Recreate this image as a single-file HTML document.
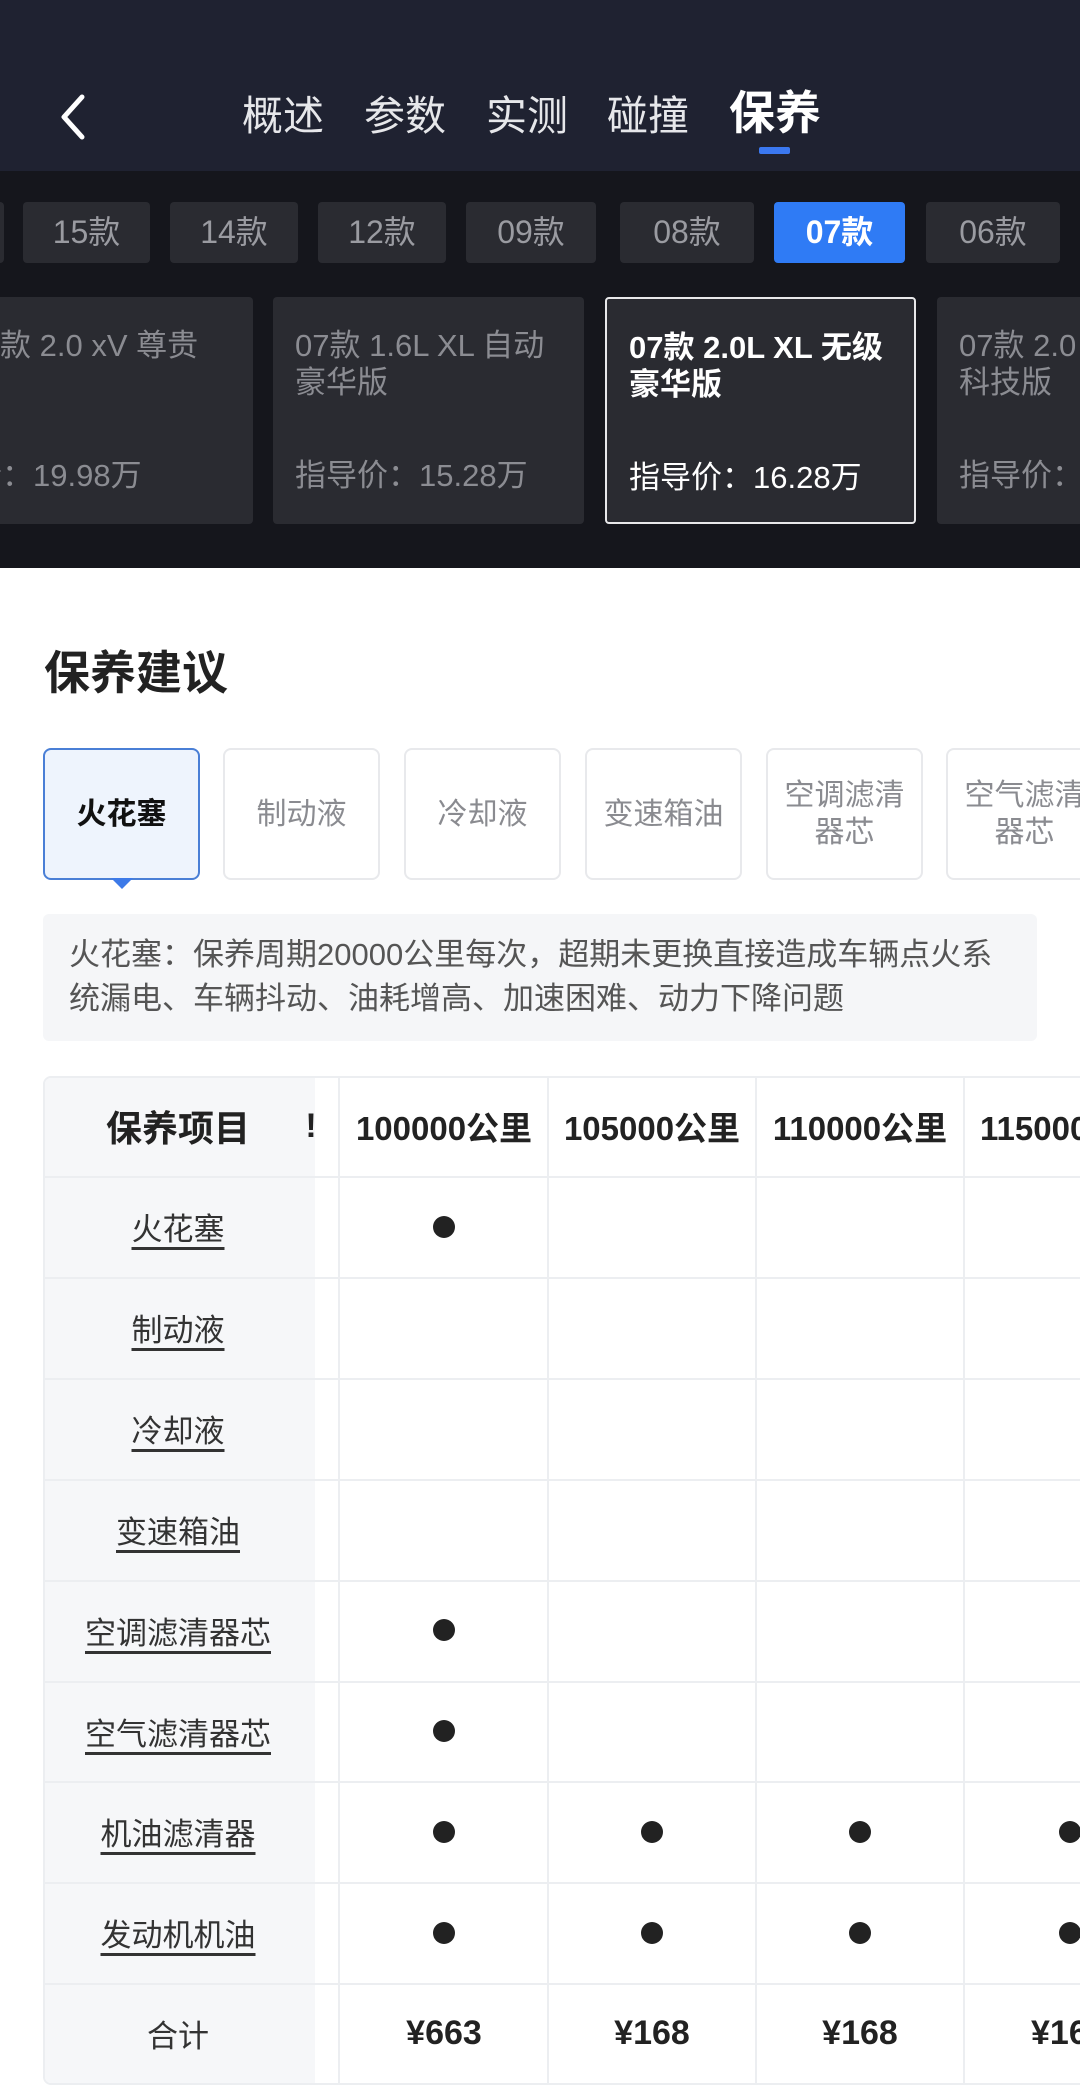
<!DOCTYPE html>
<html><head><meta charset="utf-8"><style>
*{margin:0;padding:0;box-sizing:border-box}
html,body{width:1080px;height:2097px;overflow:hidden}
body{background:#fff;font-family:"Liberation Sans","Noto Sans CJK SC",sans-serif;position:relative}
#w{position:absolute;left:0;top:0;width:1080px;height:2097px;overflow:hidden}
.a{position:absolute}
.hdr{left:0;top:0;width:1080px;height:171px;background:#1f2231}
.tab{top:88px;font-size:41px;color:#e6e7ea;line-height:56px}
.dark{left:0;top:171px;width:1080px;height:397px;background:#15161c}
.chip{top:202px;height:61px;background:#2a2b31;border-radius:4px;color:#9a9ba1;font-size:32px;line-height:61px;text-align:center}
.card{top:297px;height:227px;background:#2a2b31;border-radius:4px;color:#8b8c92;font-size:31px;line-height:37px;padding:30px 22px}
.card .p{position:absolute;left:22px;top:160px}
.btn{top:748px;height:132px;width:157px;border:2px solid #e8e9ec;border-radius:8px;background:#fff;color:#8a8b90;font-size:30px;line-height:37px;display:flex;align-items:center;justify-content:center;text-align:center}
.cell{position:absolute;display:flex;align-items:center;justify-content:center;font-size:31px;color:#333}
.dot{width:22px;height:22px;border-radius:50%;background:#222}
.u{text-decoration:underline;text-underline-offset:7px;color:#333}
</style></head><body><div id="w">
<div class="a hdr"></div>
<svg class="a" style="left:58px;top:94px" width="30" height="46" viewBox="0 0 30 46"><path d="M24 3 L6 23 L24 43" fill="none" stroke="#fff" stroke-width="5" stroke-linecap="round" stroke-linejoin="round"/></svg>
<div class="a tab" style="left:242px">概述</div>
<div class="a tab" style="left:364px">参数</div>
<div class="a tab" style="left:486px">实测</div>
<div class="a tab" style="left:607px">碰撞</div>
<div class="a tab" style="left:729px;top:85px;font-size:46px;font-weight:bold;color:#fff">保养</div>
<div class="a" style="left:759px;top:147px;width:31px;height:7px;background:#3b78f0;border-radius:2px"></div>
<div class="a dark"></div>
<div class="a chip" style="left:-10px;width:14px"></div>
<div class="a chip" style="left:23px;width:127px">15款</div>
<div class="a chip" style="left:170px;width:128px">14款</div>
<div class="a chip" style="left:318px;width:128px">12款</div>
<div class="a chip" style="left:466px;width:130px">09款</div>
<div class="a chip" style="left:620px;width:134px">08款</div>
<div class="a chip" style="left:774px;width:131px;background:#2f7bf5;color:#fff;font-weight:bold">07款</div>
<div class="a chip" style="left:926px;width:134px">06款</div>
<div class="a card" style="left:-60px;width:313px;padding-left:60px">款 2.0 xV 尊贵<div class="p" style="left:0">导价：19.98万</div></div>
<div class="a card" style="left:273px;width:311px">07款 1.6L XL 自动<br>豪华版<div class="p">指导价：15.28万</div></div>
<div class="a card" style="left:605px;width:311px;border:2px solid #e8e8ea;color:#fff;font-weight:bold">07款 2.0L XL 无级<br>豪华版<div class="p" style="font-weight:normal">指导价：16.28万</div></div>
<div class="a card" style="left:937px;width:311px">07款 2.0<br>科技版<div class="p">指导价：</div></div>
<div class="a" style="left:44px;top:645px;font-size:46px;font-weight:bold;color:#222;line-height:56px">保养建议</div>
<div class="a btn" style="left:43px;border-color:#4a7fd6;background:#eef4fd;color:#111;font-weight:bold;font-size:30px">火花塞</div>
<div class="a" style="left:111px;top:878px;width:0;height:0;border-left:11px solid transparent;border-right:11px solid transparent;border-top:11px solid #3d7ae8"></div>
<div class="a btn" style="left:223px">制动液</div>
<div class="a btn" style="left:404px">冷却液</div>
<div class="a btn" style="left:585px">变速箱油</div>
<div class="a btn" style="left:766px">空调滤清<br>器芯</div>
<div class="a btn" style="left:946px">空气滤清<br>器芯</div>
<div class="a" style="left:43px;top:914px;width:994px;height:127px;background:#f5f6f8;border-radius:6px;padding:19px 26px;font-size:31px;line-height:44px;color:#555;white-space:nowrap">火花塞：保养周期20000公里每次，超期未更换直接造成车辆点火系<br>统漏电、车辆抖动、油耗增高、加速困难、动力下降问题</div>
<div class="a" style="left:43px;top:1076px;width:1100px;height:1009px;border:2px solid #eceef1;border-radius:8px;overflow:hidden">
<div class="a" style="left:0;top:0;width:270px;height:1009px;background:#f6f7f9"></div>
</div>
<div id="t"></div>
</div>
<script>
var rows=["火花塞","制动液","冷却液","变速箱油","空调滤清器芯","空气滤清器芯","机油滤清器","发动机机油"];
var dots=[[1,0,0,0],[0,0,0,0],[0,0,0,0],[0,0,0,0],[1,0,0,0],[1,0,0,0],[1,1,1,1],[1,1,1,1]];
var cols=[340,548,756,964],W=208,h='';
var tops=[1076,1176];for(var i=1;i<10;i++)tops.push(1176+i*100.9);
for(var i=1;i<10;i++)h+='<div class="a" style="left:45px;top:'+tops[i]+'px;width:1035px;height:2px;background:#eceef1"></div>';
h+='<div class="a" style="left:338px;top:1078px;width:2px;height:1006px;background:#eceef1"></div>';
cols.forEach(function(c){h+='<div class="a" style="left:'+(c+W-1)+'px;top:1078px;width:2px;height:1006px;background:#eceef1"></div>'});
var hd=["100000公里","105000公里","110000公里","115000公里"];
h+='<div class="cell" style="left:43px;width:270px;top:1076px;height:100px;font-weight:bold;font-size:36px;color:#222">保养项目</div>';
h+='<div class="cell" style="left:306px;width:10px;top:1076px;height:100px;font-weight:bold;overflow:hidden;color:#222;font-size:34px">!</div>';
cols.forEach(function(c,j){h+='<div class="cell" style="left:'+c+'px;width:'+W+'px;top:1076px;height:100px;font-weight:bold;font-size:33px;color:#222;white-space:nowrap;'+(j==3?'justify-content:flex-start;padding-left:16px':'')+'">'+hd[j]+'</div>'});
rows.forEach(function(r,i){var t=tops[i+1];
h+='<div class="cell" style="left:43px;width:270px;top:'+t+'px;height:101px"><span class="u">'+r+'</span></div>';
cols.forEach(function(c,j){if(dots[i][j])h+='<div class="cell" style="left:'+c+'px;width:'+W+'px;top:'+t+'px;height:101px;'+(j==3?'justify-content:flex-start;padding-left:95px':'')+'"><div class="dot"></div></div>'});});
var t=tops[9],pr=["¥663","¥168","¥168","¥168"];
h+='<div class="cell" style="left:43px;width:270px;top:'+t+'px;height:101px">合计</div>';
cols.forEach(function(c,j){h+='<div class="cell" style="left:'+c+'px;width:'+W+'px;top:'+t+'px;height:101px;font-weight:bold;font-size:34px;color:#222;'+(j==3?'justify-content:flex-start;padding-left:67px':'')+'">'+pr[j]+'</div>'});
document.getElementById('t').innerHTML=h;
</script>
</body></html>
